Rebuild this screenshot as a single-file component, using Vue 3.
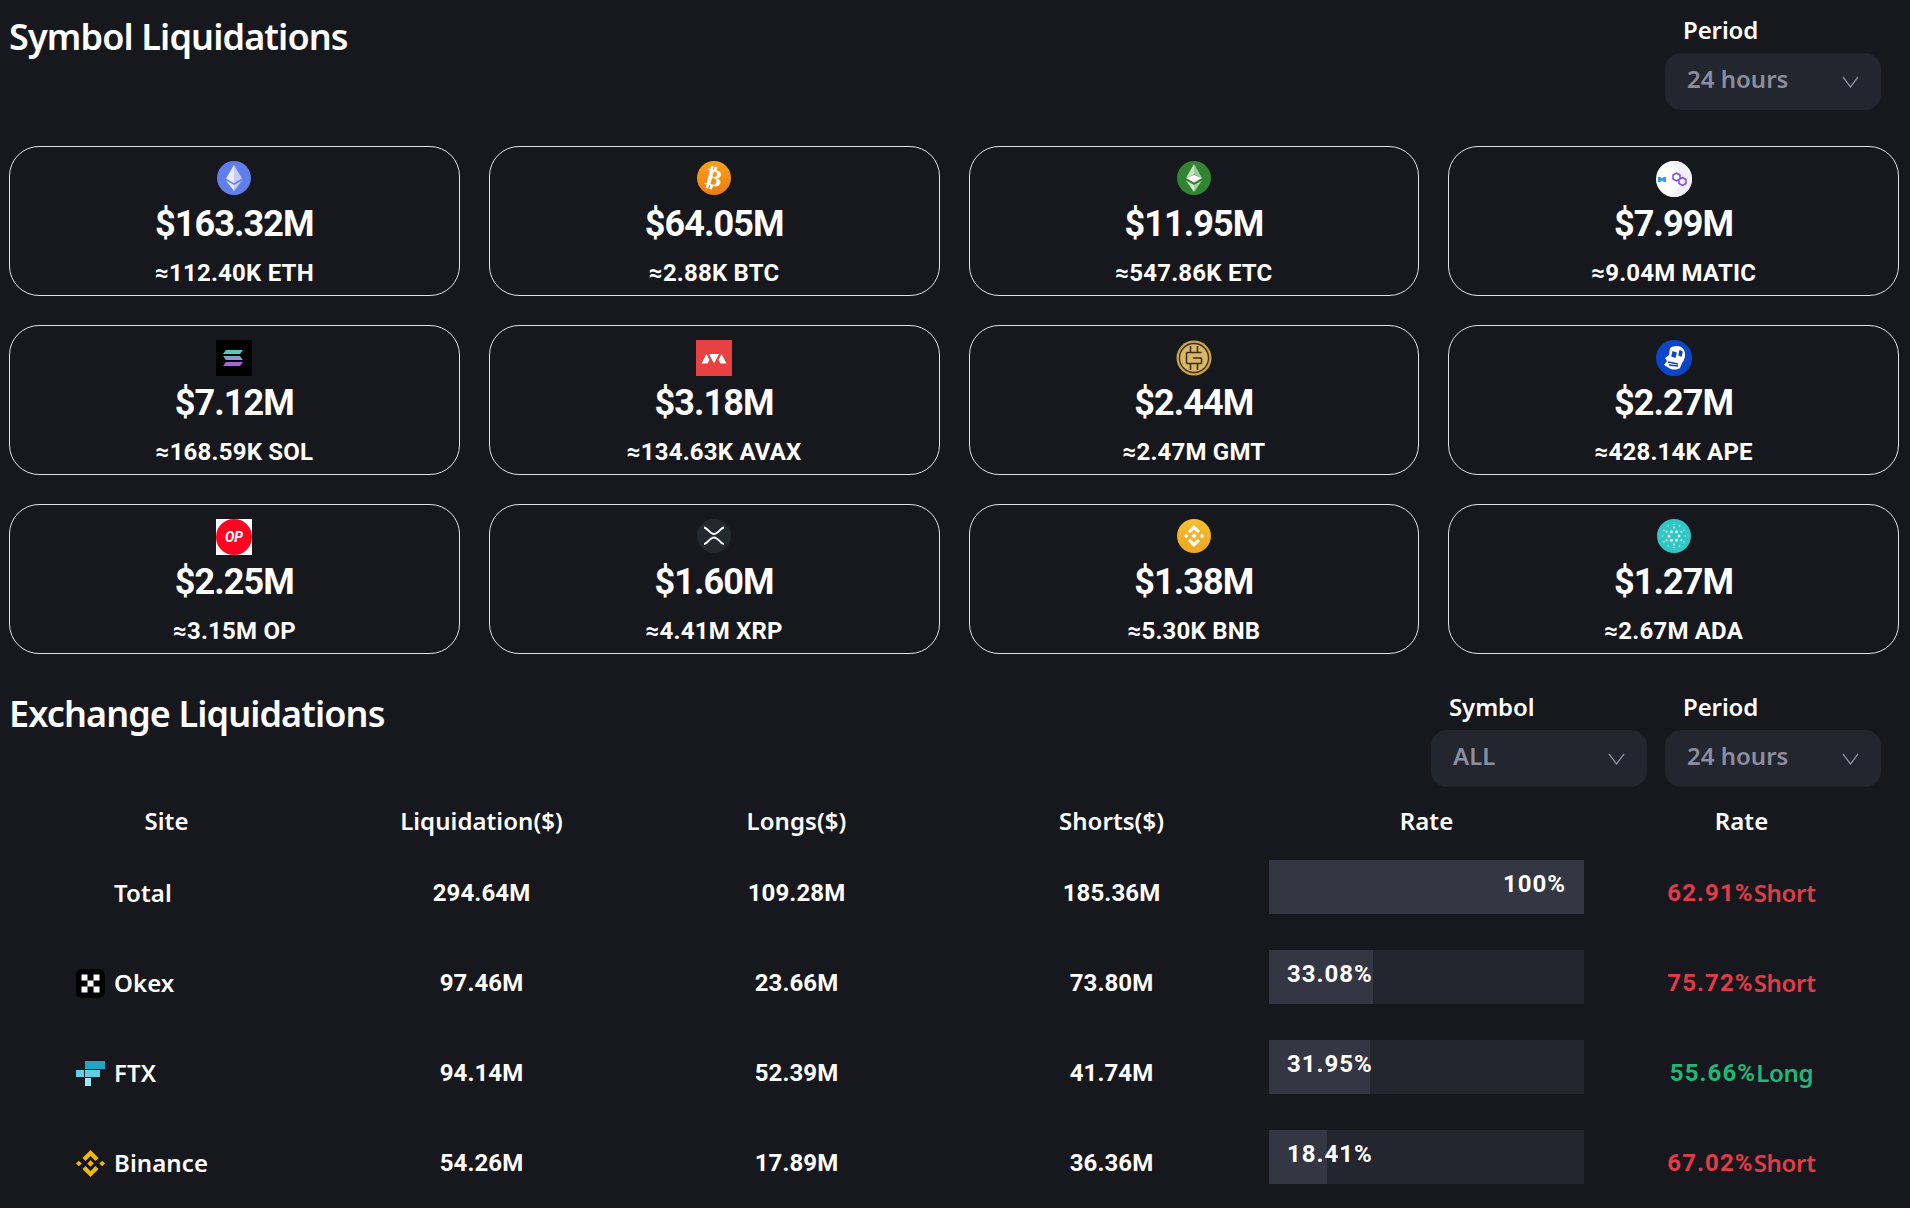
<script setup>
const symbols = [
  { key: 'eth', value: '$163.32M', amount: '≈112.40K ETH', lift: true },
  { key: 'btc', value: '$64.05M', amount: '≈2.88K BTC', lift: true },
  { key: 'etc', value: '$11.95M', amount: '≈547.86K ETC', lift: true },
  { key: 'matic', value: '$7.99M', amount: '≈9.04M MATIC' },
  { key: 'sol', value: '$7.12M', amount: '≈168.59K SOL' },
  { key: 'avax', value: '$3.18M', amount: '≈134.63K AVAX' },
  { key: 'gmt', value: '$2.44M', amount: '≈2.47M GMT' },
  { key: 'ape', value: '$2.27M', amount: '≈428.14K APE' },
  { key: 'op', value: '$2.25M', amount: '≈3.15M OP' },
  { key: 'xrp', value: '$1.60M', amount: '≈4.41M XRP', lift: true },
  { key: 'bnb', value: '$1.38M', amount: '≈5.30K BNB', lift: true },
  { key: 'ada', value: '$1.27M', amount: '≈2.67M ADA', lift: true }
]

const exchanges = [
  { name: 'Total', icon: '', total: '294.64M', longs: '109.28M', shorts: '185.36M', share: 100, label: '100%', rate: '62.91%', side: 'Short' },
  { name: 'Okex', icon: 'okex', total: '97.46M', longs: '23.66M', shorts: '73.80M', share: 33.08, label: '33.08%', rate: '75.72%', side: 'Short' },
  { name: 'FTX', icon: 'ftx', total: '94.14M', longs: '52.39M', shorts: '41.74M', share: 31.95, label: '31.95%', rate: '55.66%', side: 'Long' },
  { name: 'Binance', icon: 'binance', total: '54.26M', longs: '17.89M', shorts: '36.36M', share: 18.41, label: '18.41%', rate: '67.02%', side: 'Short' }
]

const columns = ['Site', 'Liquidation($)', 'Longs($)', 'Shorts($)', 'Rate', 'Rate']

// dots for the cardano logo
const adaDots = []
for (const [r, n, s] of [[5, 6, 1.5], [8.5, 6, 1], [11.5, 12, 0.7]]) {
  for (let i = 0; i < n; i++) {
    const a = (i / n) * Math.PI * 2 + (n === 6 && r === 8.5 ? Math.PI / 6 : 0)
    adaDots.push({ x: 18 + r * Math.cos(a), y: 18 + r * Math.sin(a), s })
  }
}
</script>

<template>
  <div class="page">
    <section>
      <header class="head">
        <h2 class="title">Symbol Liquidations</h2>
        <div class="filters">
          <div class="filter">
            <label>Period</label>
            <div class="select">
              <span>24 hours</span>
              <svg width="17" height="12" viewBox="0 0 17 12"><path d="M1 1l7.500 10L16 1" fill="none" stroke="#8b8e9f" stroke-width="1.3" /></svg>
            </div>
          </div>
        </div>
      </header>

      <div class="cards">
        <div v-for="s in symbols" :key="s.key" class="card">
          <svg class="coin" :class="{ lift: s.lift }" width="36" height="36" viewBox="0 0 36 36">
            <defs>
              <linearGradient id="btc-grad" x1="0" y1="0" x2="0" y2="1">
                <stop offset="0" stop-color="#f7a11f" />
                <stop offset="1" stop-color="#ee7b14" />
              </linearGradient>
              <linearGradient id="bnb-grad" x1="0" y1="0" x2="0" y2="1">
                <stop offset="0" stop-color="#f5c02f" />
                <stop offset="1" stop-color="#eba81f" />
              </linearGradient>
            </defs>

            <template v-if="s.key === 'eth'">
              <circle cx="18" cy="18" r="17" fill="#627eea" />
              <path d="M18 5l-8 13.500 8 4.700z" fill="#e8edfc" />
              <path d="M18 5l8 13.500-8 4.700z" fill="#c3cff7" />
              <path d="M10 20.500L18 31v-6z" fill="#e8edfc" />
              <path d="M26 20.500L18 31v-6z" fill="#c3cff7" />
            </template>

            <template v-else-if="s.key === 'btc'">
              <circle cx="18" cy="18" r="17" fill="url(#btc-grad)" />
              <text x="18" y="26" text-anchor="middle" font-size="24" font-weight="700" fill="#fff" font-family="DejaVu Sans" transform="rotate(14 18 18)">₿</text>
            </template>

            <template v-else-if="s.key === 'etc'">
              <circle cx="18" cy="18" r="17" fill="#328432" />
              <path d="M18 4l-8 14 8-3.400z" fill="#c7e3c7" />
              <path d="M18 4l8 14-8-3.400z" fill="#9dcd9d" />
              <path d="M10 18l8-3 8 3-8 4.400z" fill="#fff" />
              <path d="M10 20.500L18 32v-7z" fill="#d9edd9" />
              <path d="M26 20.500L18 32v-7z" fill="#a9d4a9" />
            </template>

            <template v-else-if="s.key === 'matic'">
              <circle cx="18" cy="18" r="18" fill="#fff" />
              <path d="M14 .5A18 18 0 0 1 36 18a18 18 0 0 1-22 17.500C21 31 24 25 24 18S21 5 14 .5z" fill="#f1f0fa" />
              <path d="M2 16h2.400l1.600 1.500L7.600 16H10v5H7.600L6 19.500 4.400 21H2z" fill="#2d9cee" />
              <path d="M20.500 12l3.500 2v4l-3.500 2-3.500-2v-4zM26.500 16.500l3.500 2v4l-3.500 2-3.500-2v-4z" fill="none" stroke="#8247e5" stroke-width="1.500" />
            </template>

            <template v-else-if="s.key === 'sol'">
              <rect width="36" height="36" fill="#000" />
              <path d="M10 10h17l-3 4H7z" fill="#4fcfb9" />
              <path d="M7 16h17l3 4H10z" fill="#7d9fd0" />
              <path d="M10 22h17l-3 4H7z" fill="#a763d8" />
            </template>

            <template v-else-if="s.key === 'avax'">
              <rect width="36" height="36" fill="#e84142" />
              <path d="M5.500 23.500L10.500 14l3 6-2 3.500zM13 14h10l-5 9.500zM30.500 23.500L25.500 14l-3 6 2 3.500z" fill="#fff" />
            </template>

            <template v-else-if="s.key === 'gmt'">
              <circle cx="18" cy="18" r="17.500" fill="#c9a24b" />
              <circle cx="18" cy="18" r="14.500" fill="#d8b868" stroke="#3a2d12" stroke-width="1.300" />
              <path d="M10.500 12.500h15M10.500 23.500h15M10.500 12.500v11M25.500 18v5.500M17 18h8.500M14.500 6v6.500M21.500 6v6.500M14.500 23.500V30M21.500 23.500V30" stroke="#3a2d12" stroke-width="1.500" fill="none" />
            </template>

            <template v-else-if="s.key === 'ape'">
              <circle cx="18" cy="18" r="18" fill="#0b46c8" />
              <path d="M14 8c4-3 12-3 14 2 2 4 1 10-2 13l-2 5c-3 2-8 2-11 0l-5-3 3-4-2-3 4-3z" fill="#fff" />
              <path d="M17 12l3 1-1 4-3-1zM24 11l2 1-1 4-2-1zM12 22l10 2M13 25l9 1" stroke="#0b46c8" stroke-width="1.400" fill="#0b46c8" />
            </template>

            <template v-else-if="s.key === 'op'">
              <rect width="36" height="36" fill="#fff" />
              <circle cx="18" cy="18" r="18" fill="#ff0420" />
              <text x="18" y="23" text-anchor="middle" font-size="14" font-weight="700" font-style="italic" fill="#fff" font-family="Roboto">OP</text>
            </template>

            <template v-else-if="s.key === 'xrp'">
              <circle cx="18" cy="18" r="17" fill="#23292f" />
              <path d="M8 9.500c3 0 6 6.500 10 6.500s7-6.500 10-6.500M8 26c3 0 6-6.500 10-6.500s7 6.500 10 6.500" fill="none" stroke="#fff" stroke-width="2" />
            </template>

            <template v-else-if="s.key === 'bnb'">
              <circle cx="18" cy="18" r="17" fill="url(#bnb-grad)" />
              <path d="M18 7l6 6-2.200 2.200-3.800-3.800-3.800 3.800L12 13zM18 29l-6-6 2.200-2.200 3.800 3.800 3.800-3.800L24 23zM8 18l2.200-2.200 2.200 2.200-2.200 2.200zM23.600 18l2.200-2.200L28 18l-2.200 2.200zM18 15.200l2.800 2.800-2.800 2.800-2.800-2.800z" fill="#fff" />
            </template>

            <template v-else-if="s.key === 'ada'">
              <circle cx="18" cy="18" r="17" fill="#33c6c6" />
              <circle v-for="(d, i) in adaDots" :key="i" :cx="d.x" :cy="d.y" :r="d.s" fill="#dff8f6" />
            </template>
          </svg>
          <div class="value">{{ s.value }}</div>
          <div class="amount">{{ s.amount }}</div>
        </div>
      </div>
    </section>

    <section class="exchange">
      <header class="head">
        <h2 class="title wide">Exchange Liquidations</h2>
        <div class="filters">
          <div class="filter">
            <label>Symbol</label>
            <div class="select">
              <span>ALL</span>
              <svg width="17" height="12" viewBox="0 0 17 12"><path d="M1 1l7.500 10L16 1" fill="none" stroke="#8b8e9f" stroke-width="1.3" /></svg>
            </div>
          </div>
          <div class="filter">
            <label>Period</label>
            <div class="select">
              <span>24 hours</span>
              <svg width="17" height="12" viewBox="0 0 17 12"><path d="M1 1l7.500 10L16 1" fill="none" stroke="#8b8e9f" stroke-width="1.3" /></svg>
            </div>
          </div>
        </div>
      </header>

      <div class="table">
        <div class="row row-head">
          <div v-for="(c, i) in columns" :key="i" class="cell">{{ c }}</div>
        </div>
        <div v-for="e in exchanges" :key="e.name" class="row">
          <div class="cell site">
            <span class="site-icon">
              <svg v-if="e.icon === 'okex'" width="29" height="29" viewBox="0 0 29 29">
                <rect width="29" height="29" rx="6" fill="#000" />
                <path d="M5.500 5.500h6v6h-6zM17.500 5.500h6v6h-6zM11.500 11.500h6v6h-6zM5.500 17.500h6v6h-6zM17.500 17.500h6v6h-6z" fill="#fff" />
              </svg>
              <svg v-else-if="e.icon === 'ftx'" width="29" height="29" viewBox="0 0 29 29">
                <path d="M9 2h20v8H9z" fill="#1fa6c6" />
                <path d="M0 11h8v7H0z" fill="#5fcde4" />
                <path d="M9 11h15v7H9z" fill="#5fcde4" />
                <path d="M9 19h6v8H9z" fill="#a6e6f2" />
              </svg>
              <svg v-else-if="e.icon === 'binance'" width="29" height="29" viewBox="0 0 29 29">
                <path d="M14.500 1l8 8-3 3-5-5-5 5-3-3zM14.500 28l-8-8 3-3 5 5 5-5 3 3zM0 14.500l2.800-2.800 2.800 2.800-2.800 2.800zM23.400 14.500l2.800-2.800 2.800 2.800-2.800 2.800zM14.500 11.300l3.200 3.200-3.200 3.200-3.200-3.200z" fill="#f0b90b" />
              </svg>
            </span>
            <span class="site-name">{{ e.name }}</span>
          </div>
          <div class="cell num">{{ e.total }}</div>
          <div class="cell num">{{ e.longs }}</div>
          <div class="cell num">{{ e.shorts }}</div>
          <div class="cell bar-cell">
            <div class="bar">
              <div class="fill" :style="{ width: e.share + '%' }">{{ e.label }}</div>
            </div>
          </div>
          <div class="cell rate" :class="e.side === 'Long' ? 'up' : 'down'">
            <span class="rate-num">{{ e.rate }}</span><span class="rate-side">{{ e.side }}</span>
          </div>
        </div>
      </div>
    </section>
  </div>
</template>

<style scoped>
.page {
  height: 1208px;
  overflow: hidden;
  padding: 0 11px 0 9px;
  box-sizing: border-box;
  background: #17181e;
  color: #fff;
  font-family: Roboto, "Liberation Sans", sans-serif;
  font-weight: 700;
  font-size: 24px;
}

.head {
  display: flex;
  justify-content: space-between;
  height: 110px;
}

.title {
  margin: 0;
  padding-top: 12px;
  font-family: "Noto Sans", sans-serif;
  font-size: 36px;
  line-height: 50px;
  font-weight: 600;
  letter-spacing: -0.87px;
}

.title.wide {
  letter-spacing: -0.9px;
}

.filters {
  display: flex;
  gap: 18px;
  padding-right: 18px;
}

.filter {
  width: 216px;
  padding-top: 12px;
}

.filter label {
  display: block;
  height: 36px;
  line-height: 36px;
  padding-left: 18px;
  margin-bottom: 5px;
  font-family: "Noto Sans", sans-serif;
  font-weight: 600;
  letter-spacing: -0.1px;
}

.select {
  height: 57px;
  padding: 0 22px;
  border-radius: 16px;
  background: #23252f;
  color: #8b8e9f;
  font-family: "Noto Sans", sans-serif;
  font-weight: 600;
  display: flex;
  align-items: center;
  justify-content: space-between;
}

.select svg {
  flex: none;
}

.select span {
  margin-top: -7px;
}

.cards {
  margin-top: 36px;
  display: grid;
  grid-template-columns: repeat(4, 1fr);
  gap: 28.75px 29px;
}

.card {
  height: 150.25px;
  box-sizing: border-box;
  border: 1px solid #e2e2e4;
  border-radius: 30px;
  padding-top: 14px;
  display: flex;
  flex-direction: column;
  align-items: center;
}

.coin {
  flex: none;
}

.coin.lift {
  transform: translateY(-1px);
}

.value {
  height: 53px;
  line-height: 54px;
  font-size: 36px;
  letter-spacing: -0.9px;
}

.amount {
  height: 46px;
  line-height: 46px;
  letter-spacing: 0.2px;
}

.exchange {
  margin-top: 22.75px;
}

.table {
  padding-top: 7px;
}

.row {
  display: grid;
  grid-template-columns: repeat(6, 1fr);
  height: 90px;
}

.row-head {
  height: 54px;
  font-family: "Noto Sans", sans-serif;
  font-weight: 600;
  letter-spacing: 0.05px;
  padding-bottom: 2px;
  box-sizing: border-box;
}

.cell {
  display: flex;
  align-items: center;
  justify-content: center;
}

.num {
  letter-spacing: 0.1px;
}

.site {
  justify-content: flex-start;
  padding-left: 67px;
}

.site-name {
  font-family: "Noto Sans", sans-serif;
  font-weight: 600;
  letter-spacing: 0.1px;
  margin-top: -2px;
}

.site-icon {
  display: flex;
  width: 29px;
  margin-right: 9px;
}

.bar-cell {
  align-items: flex-start;
  padding-top: 12px;
}

.bar {
  width: 100%;
  height: 54px;
  background: #23252f;
}

.fill {
  height: 54px;
  box-sizing: border-box;
  padding: 0 18px;
  line-height: 48px;
  text-align: right;
  background: #343644;
  white-space: nowrap;
  letter-spacing: 1px;
}

.rate-num {
  letter-spacing: 1.1px;
}

.rate-side {
  font-family: "Noto Sans", sans-serif;
  font-weight: 600;
  letter-spacing: -0.3px;
  margin-top: -2px;
}

.up {
  color: #1fb878;
}

.down {
  color: #e13c47;
}
</style>

<style>
html, body {
  background: #17181e;
}
</style>
